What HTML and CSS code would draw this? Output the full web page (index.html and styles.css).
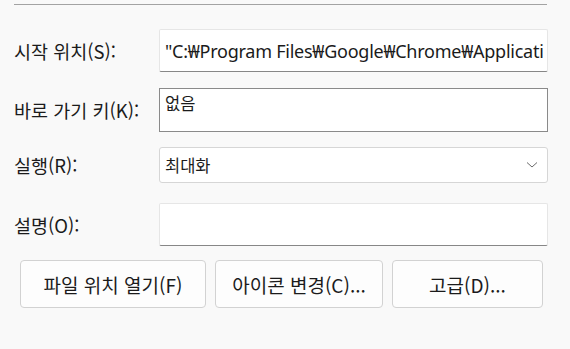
FILE: index.html
```html
<!DOCTYPE html>
<html lang="ko">
<head>
  <meta charset="UTF-8" />
  <title>속성</title>
  <link rel="stylesheet" href="styles.css">
</head>
<body>
  <div class="panel">
    <hr class="divider">
    <div class="form">
      <div class="row row-tall">
        <label class="label">시작 위치(S):</label>
        <div class="field field-path">"C:₩Program Files₩Google₩Chrome₩Applicati</div>
      </div>
      <div class="row row-tall">
        <label class="label">바로 가기 키(K):</label>
        <div class="field field-focus">없음</div>
      </div>
      <div class="row row-select">
        <label class="label">실행(R):</label>
        <div class="field select">
          <span>최대화</span>
          <svg class="chevron" width="12" height="8" viewBox="0 0 12 8">
            <path d="M1 1.5 L6 6 L11 1.5" fill="none" stroke="#6b6b6b" stroke-width="1"/>
          </svg>
        </div>
      </div>
      <div class="row row-tall">
        <label class="label">설명(O):</label>
        <div class="field"></div>
      </div>
    </div>
    <div class="buttons">
      <button class="btn btn-open">파일 위치 열기(F)</button>
      <button class="btn btn-icon">아이콘 변경(C)...</button>
      <button class="btn btn-adv">고급(D)...</button>
    </div>
  </div>
</body>
</html>
```

FILE: styles.css
```css
html, body {
  margin: 0;
  background: #f9f9f9;
}
body {
  font-family: "Noto Sans CJK KR", "Noto Sans", sans-serif;
  font-size: 18.5px;
  color: #1b1b1b;
}
.panel {
  width: 570px;
  height: 349px;
  padding-top: 4px;
  box-sizing: border-box;
}
.divider {
  margin: 0 23px 0 14px;
  border: 0;
  border-top: 1px solid #a3a3a3;
  height: 0;
}
.form {
  margin-top: 24px;
  padding-left: 14px;
}
.row {
  display: flex;
  align-items: center;
}
.row-tall {
  height: 43px;
  margin-bottom: 16px;
}
.row-select {
  height: 36px;
  margin-bottom: 20px;
}
.label {
  width: 145px;
  flex: none;
}
.field {
  width: 389px;
  height: 100%;
  box-sizing: border-box;
  background: #fff;
  border: 1px solid #e6e6e6;
  border-bottom-color: #878787;
  border-radius: 2px;
  padding: 0 0 0 5px;
  display: flex;
  align-items: center;
  white-space: nowrap;
  overflow: hidden;
  font-size: 16.5px;
}
.field-path {
  font-family: "Noto Sans", "Noto Sans CJK KR", sans-serif;
  font-size: 18px;
  letter-spacing: -0.25px;
}
.field-focus {
  height: 44px;
  border: 1px solid #8a8a8a;
  border-radius: 0;
  align-items: flex-start;
  padding-top: 2px;
}
.select {
  border: 1px solid #d6d6d6;
  border-radius: 3px;
  justify-content: space-between;
  padding-right: 9px;
}
.chevron {
  flex: none;
}
.buttons {
  display: flex;
  gap: 9px;
  margin-top: -2px;
  padding-left: 20px;
}
.btn {
  height: 48px;
  box-sizing: border-box;
  background: #fdfdfd;
  border: 1px solid #d2d2d2;
  border-radius: 4px;
  font-family: inherit;
  font-size: 19px;
  color: #1b1b1b;
  padding: 0;
}
.btn-open { width: 186px; }
.btn-icon { width: 168px; }
.btn-adv { width: 151px; }
```
